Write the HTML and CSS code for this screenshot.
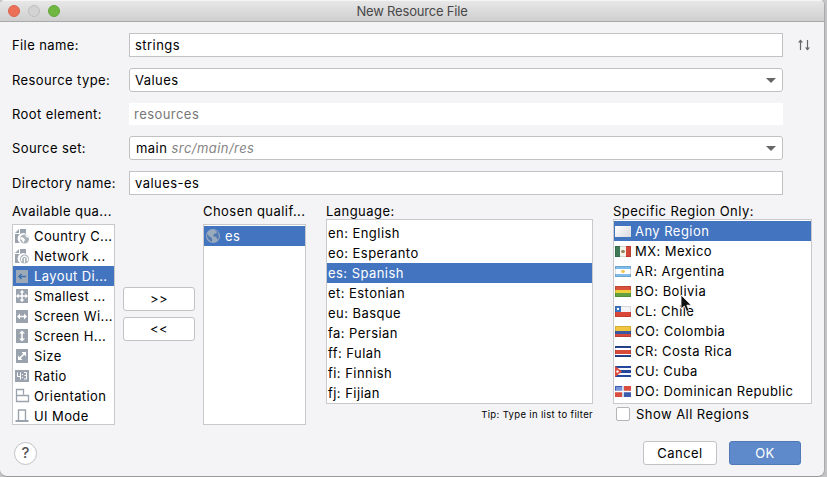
FILE: index.html
```html
<!DOCTYPE html>
<html lang="en">
<head>
<meta charset="utf-8">
<title>New Resource File</title>
<link rel="stylesheet" href="styles.css">
</head>
<body>
<div class="window">
  <header class="titlebar">
    <div class="lights"><i class="light close"></i><i class="light minimize"></i><i class="light maximize"></i></div>
    <h1>New Resource File</h1>
  </header>
  <main>
    <div class="form">
      <label>File name:</label><div class="field">strings</div>
      <svg class="sort" width="14" height="12" viewBox="0 0 14 12"><path d="M3.500 11V1M10.500 1v10" stroke="#666" stroke-width="1.200"/><path d="M1 3.500L3.500 .5 6 3.500zM8 8.500l2.500 3 2.500-3z" fill="#666"/></svg>
      <label>Resource type:</label><div class="field combo"><span>Values</span><i class="arrow"></i></div><span></span>
      <label>Root element:</label><div class="field readonly">resources</div><span></span>
      <label>Source set:</label><div class="field combo source"><span>main <em>src/main/res</em></span><i class="arrow"></i></div><span></span>
      <label>Directory name:</label><div class="field">values-es</div><span></span>
    </div>
    <div class="panels">
      <section class="available">
        <h2>Available qua...</h2>
        <ul class="list tall">
          <li><svg width="16" height="16" viewBox="0 0 16 16"><path d="M5 1v4H1z M6 1h6v5a5 5 0 0 0-6 9H1V6h5z" fill="#9aa3ad"/><circle cx="10.500" cy="11" r="4.500" fill="#a9b1b9"/><path d="M7 9l3 1 1 2-2 3-1-3-2-1zM11 7l1 2 3 1-1-2z" fill="#fff"/></svg><span>Country C...</span></li>
          <li><svg width="16" height="16" viewBox="0 0 16 16"><path d="M5 1v4H1z M6 1h6v5a5 5 0 0 0-6 9H1V6h5z" fill="#9aa3ad"/><circle cx="10.500" cy="11" r="4.500" fill="#a9b1b9"/><path d="M8 13a3 3 0 1 1 5 0M10.500 10v5" fill="none" stroke="#fff" stroke-width="1.200"/></svg><span>Network ...</span></li>
          <li class="selected"><svg width="16" height="16" viewBox="0 0 16 16"><path d="M2 2h12v13H2z" fill="#9da9b7"/><path d="M12 8.500H5M7.500 6L5 8.500 7.500 11" fill="none" stroke="#3f6fae" stroke-width="1.500"/></svg><span>Layout Di...</span></li>
          <li><svg width="16" height="16" viewBox="0 0 16 16"><path d="M2 1h12v14H2z" fill="#9aa3ad"/><path d="M8 3v10M3 8h10" stroke="#fff" stroke-width="1.500"/><path d="M5.500 4.500L8 2l2.500 2.500zM5.500 11.500L8 14l2.500-2.500zM4.700 5.500L2 8l2.700 2.500zM11.300 5.500L14 8l-2.700 2.500z" fill="#fff"/></svg><span>Smallest ...</span></li>
          <li><svg width="16" height="16" viewBox="0 0 16 16"><path d="M2 2h12v13H2z" fill="#9aa3ad"/><path d="M4 8.500h8" stroke="#fff" stroke-width="1.600"/><path d="M6 5.500L3 8.500l3 3zM10 5.500l3 3-3 3z" fill="#fff"/></svg><span>Screen Wi...</span></li>
          <li><svg width="16" height="16" viewBox="0 0 16 16"><path d="M2 1h12v14H2z" fill="#9aa3ad"/><path d="M8 4v8" stroke="#fff" stroke-width="1.600"/><path d="M5 5.500l3-3 3 3zM5 10.500l3 3 3-3z" fill="#fff"/></svg><span>Screen H...</span></li>
          <li><svg width="16" height="16" viewBox="0 0 16 16"><path d="M2 1h12v14H2z" fill="#9aa3ad"/><path d="M5.500 10.500l5-5" stroke="#fff" stroke-width="1.600"/><path d="M7.500 4H12v4.500zM4 7.500V12h4.500z" fill="#fff"/></svg><span>Size</span></li>
          <li><svg width="16" height="16" viewBox="0 0 16 16"><path d="M1 2h14v12H1z" fill="#9aa3ad"/><path d="M3.500 4.500v4H6M6.500 4.500v7M10 4.500h2.500v6.500H10M10.500 7.500h2M8.500 6v1M8.500 9v1" fill="none" stroke="#fff"/></svg><span>Ratio</span></li>
          <li><svg width="16" height="16" viewBox="0 0 16 16"><path d="M2.500 7.500v-6h7v5M2.500 7.500h12v6h-12z" fill="none" stroke="#9aa3ad" stroke-width="1.300"/></svg><span>Orientation</span></li>
          <li><svg width="16" height="16" viewBox="0 0 16 16"><path d="M4.500 12V2h7v10" fill="none" stroke="#9aa3ad" stroke-width="1.400"/><path d="M1.500 12h13v2h-13z" fill="#9aa3ad"/></svg><span>UI Mode</span></li>
        </ul>
      </section>
      <div class="move"><button>&gt;&gt;</button><button>&lt;&lt;</button></div>
      <section class="chosen">
        <h2>Chosen qualif...</h2>
        <ul class="list tall">
          <li class="selected"><svg width="16" height="16" viewBox="0 0 16 16"><circle cx="8" cy="8" r="7" fill="#9aaabd"/><path d="M2 6l3 3 2 1v4l-3-2-2-3zM7 2h3l2 3-3 1-1 2 3 1 2 3 1-3-1-5-3-2z" fill="#5279b2"/></svg><span>es</span></li>
        </ul>
      </section>
      <section class="language">
        <h2>Language:</h2>
        <ul class="list">
          <li>en: English</li><li>eo: Esperanto</li><li class="selected">es: Spanish</li><li>et: Estonian</li><li>eu: Basque</li><li>fa: Persian</li><li>ff: Fulah</li><li>fi: Finnish</li><li>fj: Fijian</li>
        </ul>
        <p class="tip">Tip: Type in list to filter</p>
      </section>
      <section class="region">
        <h2>Specific Region Only:</h2>
        <ul class="list">
          <li class="selected"><i class="flag any"></i><span>Any Region</span></li>
          <li><i class="flag mx"></i><span>MX: Mexico</span></li>
          <li><i class="flag ar"></i><span>AR: Argentina</span></li>
          <li><i class="flag bo"></i><span>BO: Bolivia</span></li>
          <li><i class="flag cl"></i><span>CL: Chile</span></li>
          <li><i class="flag co"></i><span>CO: Colombia</span></li>
          <li><i class="flag cr"></i><span>CR: Costa Rica</span></li>
          <li><svg class="flag" viewBox="0 0 16 11"><path fill="#24479b" d="M0 0h16v11H0z"/><path d="M0 3h16M0 8h16" stroke="#f4f6ff" stroke-width="2"/><path d="M0 0l7 5.500L0 11z" fill="#dc4b3d"/><circle cx="2.500" cy="5.500" r="1.200" fill="#fff"/></svg><span>CU: Cuba</span></li>
          <li><svg class="flag" viewBox="0 0 16 11"><path fill="#3c5cad" d="M0 0h16v11H0z"/><path fill="#d94c3e" d="M9 0h7v5H9zM0 6h7v5H0z"/><path fill="#7893d8" d="M1 1h6v4H1z"/><path d="M8 0v11M0 5.500h16" stroke="#fff" stroke-width="1.500"/></svg><span>DO: Dominican Republic</span></li>
        </ul>
        <label class="show"><i class="checkbox"></i>Show All Regions</label>
      </section>
    </div>
    <footer>
      <button class="help">?</button>
      <button class="cancel">Cancel</button>
      <button class="ok">OK</button>
    </footer>
  </main>
</div>
<svg class="pointer" width="12" height="19" viewBox="0 0 12 19"><path d="M1 1v14l3.300-3 2.300 5.500 2.500-1-2.300-5.300h4.500z" fill="#111" stroke="#fff" stroke-width=".8"/></svg>
</body>
</html>
```
FILE: styles.css
```css
* { box-sizing: border-box; }
body {
  margin: 0;
  height: 477px;
  overflow: hidden;
  background: #c4c4c6;
  font: 13px/20px Inter, "Liberation Sans", sans-serif;
  letter-spacing: .45px;
  color: #000;
}
h1, h2, p, ul { margin: 0; padding: 0; font-size: inherit; font-weight: 400; }
ul { list-style: none; }
.window {
  width: 825px;
  height: 477px;
  display: flex;
  flex-direction: column;
  background: #f4f4f6;
  border-right: 1px solid #aaa;
  border-bottom: 1px solid #999;
  border-radius: 5px 5px 7px 7px;
  overflow: hidden;
}
.titlebar {
  flex: none;
  height: 22px;
  display: grid;
  grid-template-columns: 60px 1fr 60px;
  align-items: center;
  border-top: 1px solid #f5f5f5;
  border-bottom: 1px solid #a9a9a9;
  background: linear-gradient(#e7e7e7, #cfcfcf);
}
.titlebar h1 { text-align: center; color: #484848; letter-spacing: -.2px; }
.lights { display: flex; gap: 8px; padding-left: 8px; }
.light { width: 12px; height: 12px; border-radius: 50%; border: 1px solid #bdbdbd; background: #d3d3d3; }
.light.close { background: #ec6f57; border-color: #d96550; }
.light.maximize { background: #70b742; border-color: #63a63b; }
main { flex: 1; padding: 11px 12px 0; }
.form {
  display: grid;
  grid-template-columns: 117px 654px 28px;
  grid-template-rows: 24px 24px 22px 24px 24px;
  row-gap: 11px;
  align-items: center;
}
.form label { letter-spacing: .4px; }
.field { height: 24px; line-height: 22px; border: 1px solid #c2c2c4; background: #fff; padding: 0 5px; }
.combo { display: flex; align-items: center; justify-content: space-between; border-radius: 3px; }
.combo em { color: #858585; }
.source { padding-left: 6px; }
.readonly { height: 22px; border-color: #fff; line-height: 20px; color: #777; padding-left: 4px; }
.arrow { border: 5px solid transparent; border-top-color: #666; border-bottom: 0; margin-right: 1px; }
.sort { justify-self: end; }
.panels {
  display: grid;
  grid-template-columns: 103px 72px 103px 267px 199px;
  column-gap: 8px;
  height: 225px;
  margin-top: 6px;
}
.panels section { display: flex; flex-direction: column; min-width: 0; }
h2 { height: 18px; line-height: 20px; white-space: nowrap; }
.list { height: 185px; border: 1px solid #c9c9cb; background: #fff; overflow: hidden; padding-top: 1px; }
.tall { height: 201px; margin-top: 5px; }
.list li { display: flex; align-items: center; height: 20px; white-space: nowrap; }
.list .selected { background: #4374c0; color: #fff; }
.available li, .chosen li { padding-left: 1px; gap: 4px; }
.list svg:not(.flag) { flex: none; }
.available li svg { margin-top: -1px; }
.available li { letter-spacing: .4px; }
.move { display: flex; flex-direction: column; gap: 6px; padding-top: 86px; }
.language { margin-left: 12px; width: 267px; }
.panels .region { margin-left: 24px; width: 199px; }
.language .list { padding-top: 3px; }
.language li { padding-left: 1px; }
.tip { font-size: 9.5px; letter-spacing: .35px; text-align: right; line-height: 21px; }
button {
  height: 24px;
  padding: 0;
  font: inherit;
  letter-spacing: inherit;
  color: #000;
  background: #fff;
  border: 1px solid #c2c2c4;
  border-radius: 3px;
}
.region li { padding-left: 1px; gap: 4px; }
.flag { width: 16px; height: 11px; flex: none; }
i.flag:not(.any) { box-shadow: inset 0 0 0 1px rgba(0, 0, 0, .12); }
.any { background: linear-gradient(135deg, #fff, #d9d9df); }
.mx { background: radial-gradient(circle, #9a8560 0 1.5px, transparent 2px), linear-gradient(90deg, #3f7955 0 5px, #f4f3eb 5px 11px, #d34537 11px); }
.ar { background: radial-gradient(circle, #f2c85c 0 1.5px, transparent 2px), linear-gradient(#7fbce9 0 3px, #fff 3px 8px, #7fbce9 8px); }
.bo { background: linear-gradient(#d9513c 0 4px, #efcf38 4px 7px, #61a13f 7px); }
.cl { background: radial-gradient(circle at 3px 3px, #fff 0 1px, transparent 1.5px), linear-gradient(#3e77c1, #3e77c1) 0 0 / 6px 6px no-repeat, linear-gradient(#f4f4f6 0 6px, #da4638 6px); }
.co { background: linear-gradient(#f1c53d 0 5px, #3859a2 5px 8px, #d5483d 8px); }
.cr { background: linear-gradient(#26448f 0 2px, #fff 2px 4px, #d84a3a 4px 8px, #fff 8px 9px, #26448f 9px); }
.show { display: flex; align-items: center; gap: 6px; padding-left: 3px; height: 20px; }
.checkbox { width: 14px; height: 14px; border: 1px solid #b5b5b7; border-radius: 2px; background: #fff; }
footer { display: flex; align-items: center; gap: 12px; margin-top: 15px; padding-right: 11px; }
.help { width: 23px; height: 23px; border-radius: 50%; font-size: 15px; color: #555; font-weight: 500; margin: 0 auto 0 2px; letter-spacing: 0; }
.cancel { width: 74px; }
.ok { width: 72px; color: #fff; background: #5e8acb; border-color: #5079b6; }
.pointer { position: absolute; left: 680px; top: 294px; }
```
